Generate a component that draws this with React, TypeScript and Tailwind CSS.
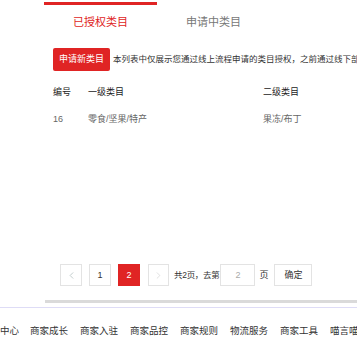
import { ChevronLeft, ChevronRight } from "lucide-react";

const footerLinks = ["商家成长", "商家入驻", "商家品控", "商家规则", "物流服务", "商家工具", "喵言喵语"];

export default function App() {
  return (
    <div className="relative h-[347px] w-[357px] overflow-hidden bg-white font-['Liberation_Sans','Noto_Sans_CJK_SC',sans-serif]">
      {/* tabs */}
      <div className="flex pl-[44px] pt-[2px]">
        <div className="flex h-[37px] w-[113px] items-center justify-center border-t-[3px] border-[#e02424] text-[11px] leading-none text-[#e02424]">
          已授权类目
        </div>
        <div className="flex h-[37px] w-[113px] items-center justify-center border-t-[3px] border-transparent text-[11px] leading-none text-[#777]">
          申请中类目
        </div>
      </div>

      <div className="pl-[53px]">
        <div className="mt-[9px] flex items-center">
          <button className="flex h-[23px] w-[57px] shrink-0 items-center justify-center rounded-[2px] bg-[#e02424] text-[9px] leading-none text-white">
            申请新类目
          </button>
          <span className="ml-[3px] whitespace-nowrap text-[8.5px] leading-none text-[#333]">
            本列表中仅展示您通过线上流程申请的类目授权，之前通过线下部分申请的类目请联系小二查询
          </span>
        </div>

        {/* table */}
        <div className="mt-[7px] flex h-[28px] items-center text-[9px] leading-none text-[#222]">
          <div className="w-[35px]">编号</div>
          <div className="w-[175px]">一级类目</div>
          <div>二级类目</div>
        </div>
        <div className="flex h-[26px] items-center text-[9px] leading-none text-[#666]">
          <div className="w-[35px]">16</div>
          <div className="w-[175px]">零食/坚果/特产</div>
          <div>果冻/布丁</div>
        </div>
      </div>

      {/* pagination */}
      <div className="mt-[132px] flex items-center pl-[60px] text-[9px] leading-none text-[#333]">
        <div className="flex h-[22px] w-[22px] items-center justify-center border border-[#e3e3e3] text-[#9aa]">
          <ChevronLeft size={11} strokeWidth={1.3} />
        </div>
        <div className="ml-[7px] flex h-[22px] w-[22px] items-center justify-center border border-[#e3e3e3]">1</div>
        <div className="ml-[7px] flex h-[22px] w-[22px] items-center justify-center bg-[#e02424] text-white">2</div>
        <div className="ml-[8px] flex h-[22px] w-[21px] items-center justify-center border border-[#e3e3e3] text-[#ccc]">
          <ChevronRight size={11} strokeWidth={1.3} />
        </div>
        <span className="ml-[5px] whitespace-nowrap text-[8.5px] tracking-[-0.3px]">共2页，去第</span>
        <div className="ml-[1px] flex h-[22px] w-[35px] items-center justify-center border border-[#e3e3e3] text-[#aaa]">2</div>
        <span className="ml-[4px]">页</span>
        <button className="ml-[6px] flex h-[22px] w-[38px] items-center justify-center border border-[#e3e3e3] text-[#333]">
          确定
        </button>
      </div>

      <div className="mt-[14px] ml-[45px] h-[3px] bg-[#dadada]" />
      <div className="mt-[4px] h-px bg-[#dedcf6]" />

      {/* footer */}
      <div className="mt-[18px] flex gap-[12px] whitespace-nowrap text-[9.5px] leading-none text-[#333]">
        <span className="w-[18px]">中心</span>
        {footerLinks.map((l) => (
          <span key={l}>{l}</span>
        ))}
      </div>
    </div>
  );
}
